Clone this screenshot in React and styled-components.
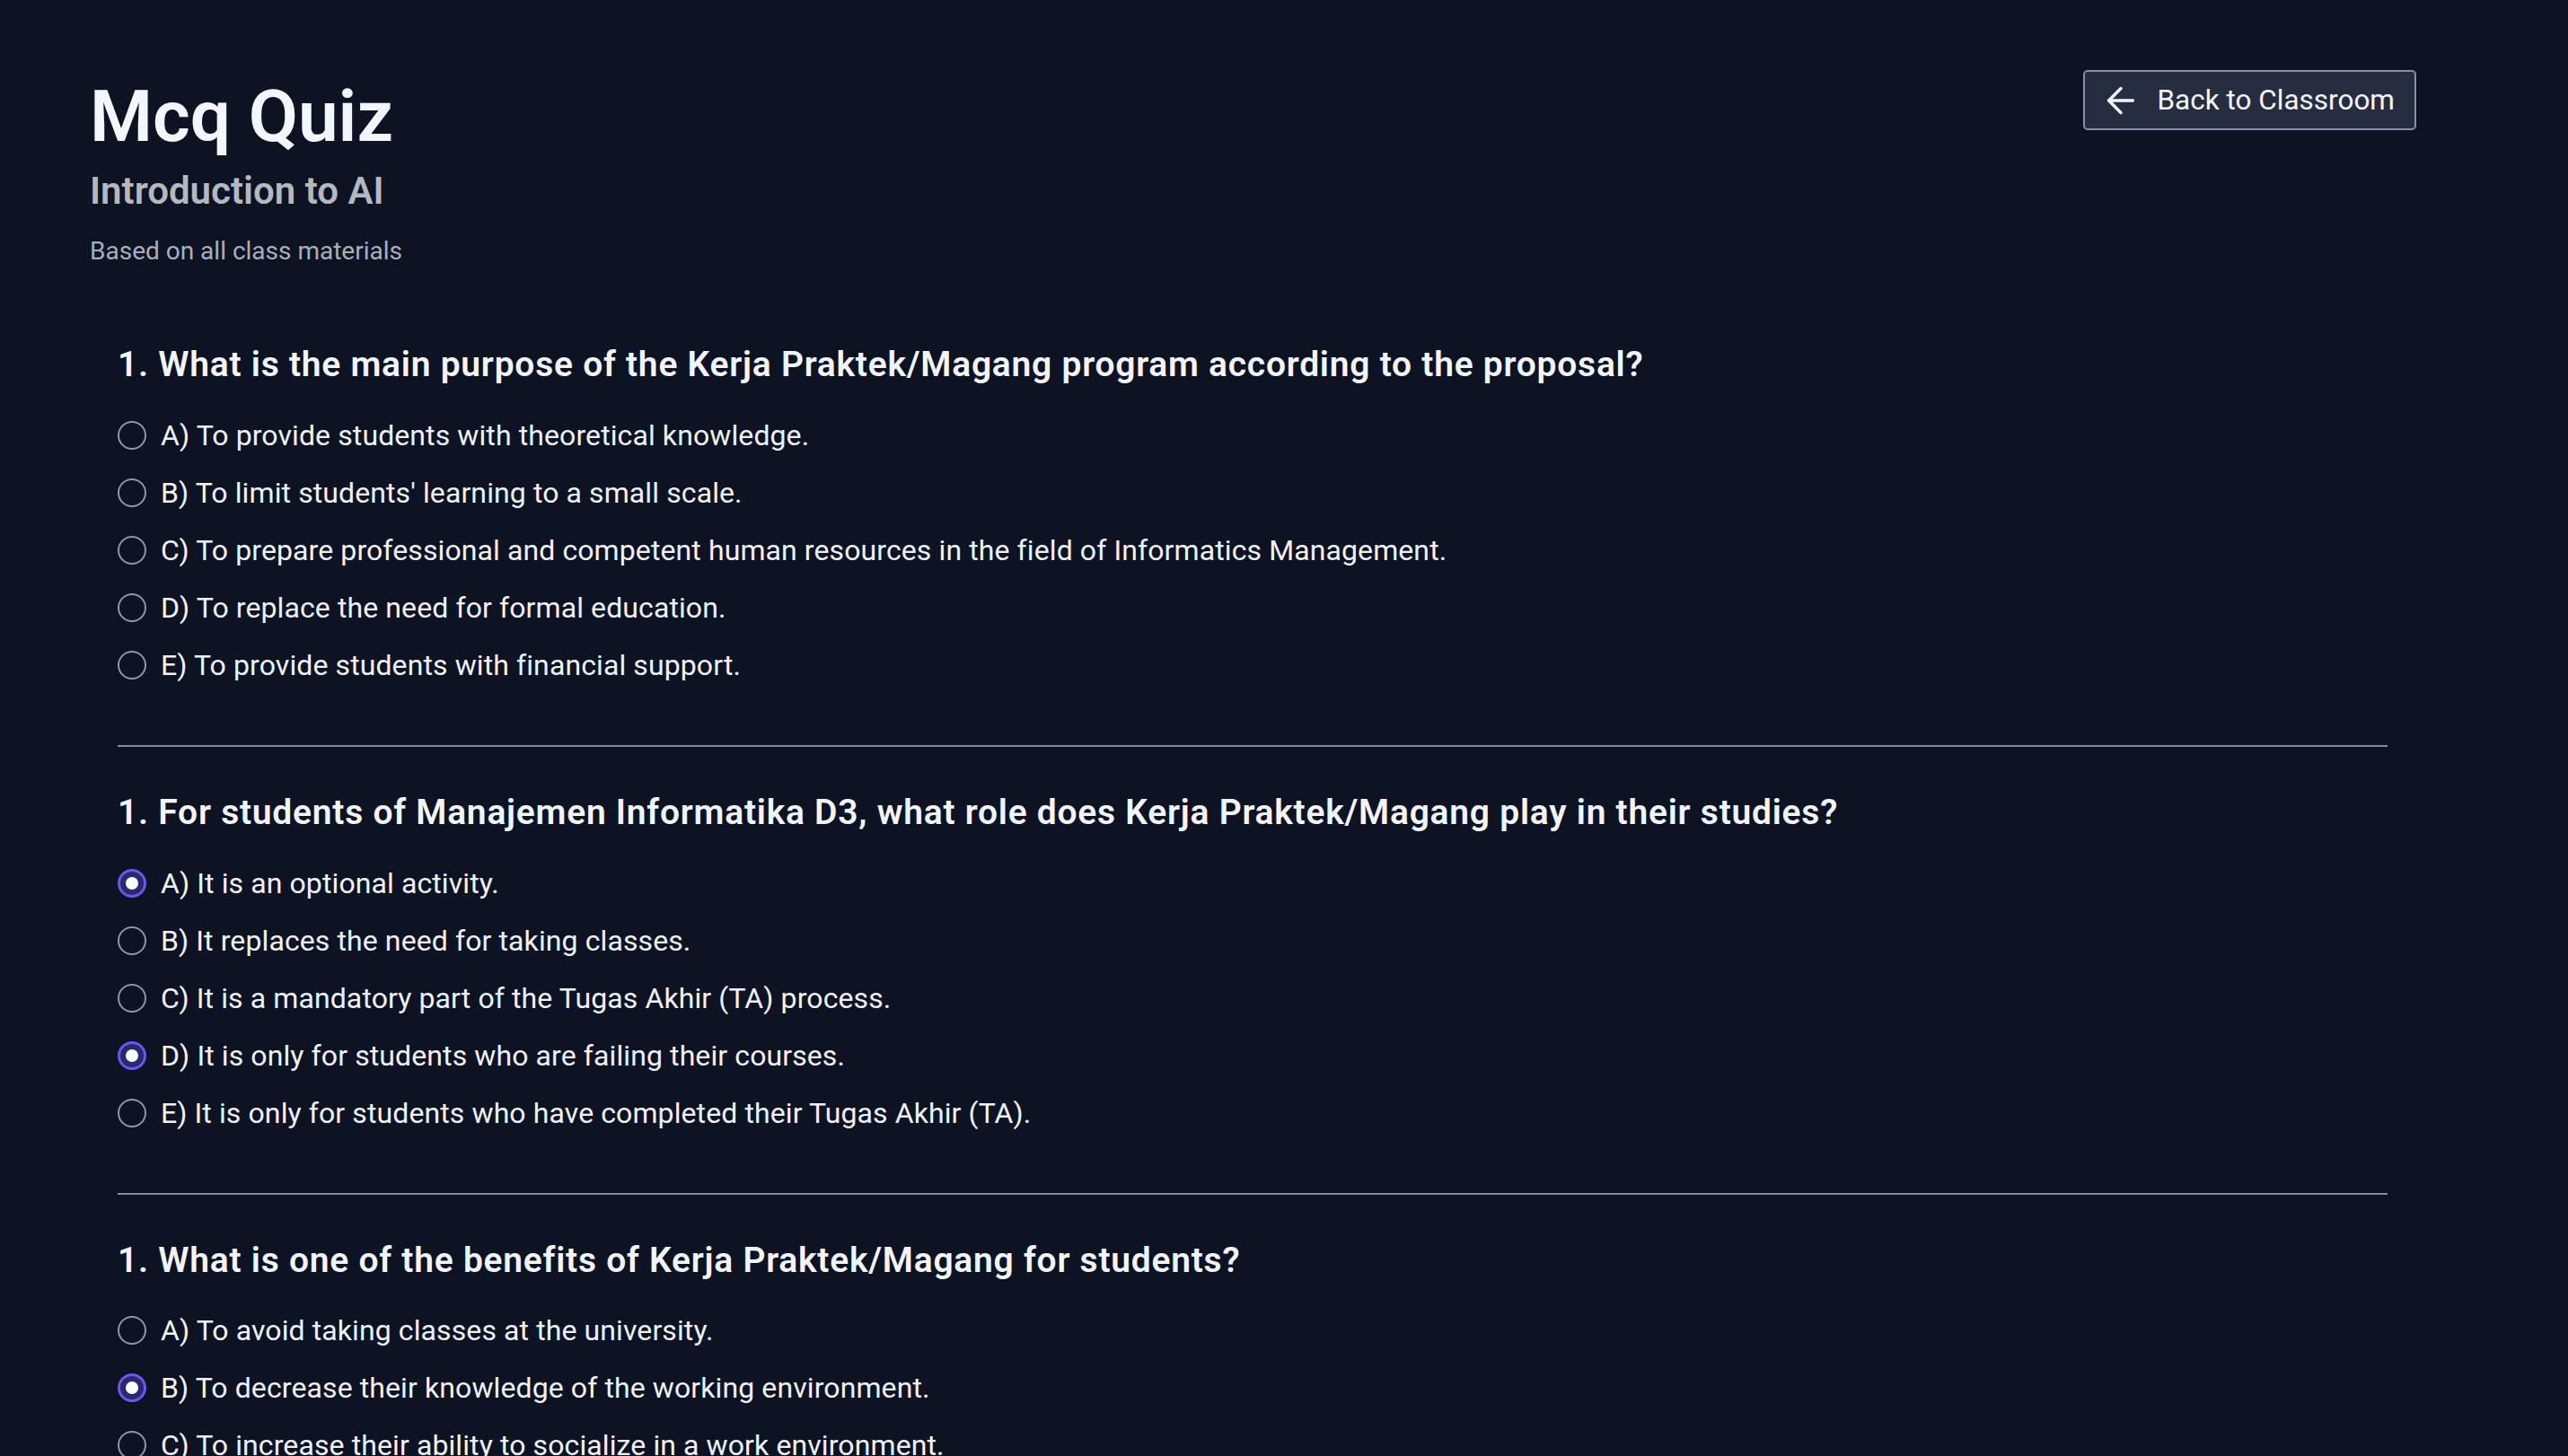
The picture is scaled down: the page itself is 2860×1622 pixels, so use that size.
import React from "react";
import styled, { createGlobalStyle } from "styled-components";
import { ArrowLeft } from "lucide-react";

const GlobalStyle = createGlobalStyle`
  html, body {
    margin: 0;
    padding: 0;
    background: #0e1323;
  }
  body {
    font-family: Roboto, "Noto Sans", "Liberation Sans", sans-serif;
    color: #f1f5fb;
  }
  * {
    box-sizing: border-box;
  }
`;

const Page = styled.div`
  min-height: 100vh;
  background: #0e1323;
  padding: 78px 169px 0 100px;
`;

const Header = styled.div`
  display: flex;
  justify-content: space-between;
  align-items: flex-start;
`;

const Title = styled.h1`
  margin: 4px 0 0;
  font-size: 80px;
  line-height: 1.2;
  font-weight: 600;
  color: #f3f6fb;
`;

const Subtitle = styled.h2`
  margin: 10px 0 0;
  font-size: 42px;
  line-height: 1.2;
  font-weight: 600;
  color: #b3b8c2;
`;

const Caption = styled.p`
  margin: 25px 0 0;
  font-size: 28px;
  line-height: 1.2;
  color: #a9afba;
`;

const BackButton = styled.button`
  display: flex;
  align-items: center;
  gap: 17px;
  height: 67px;
  padding: 0 22px 0 17px;
  background: #272d40;
  border: 2px solid #8790a6;
  border-radius: 5px;
  color: #f3f6fb;
  font-family: inherit;
  font-size: 31.5px;
  cursor: pointer;
`;

const QuestionList = styled.div`
  margin: 86px 32px 0 31px;
`;

const Question = styled.section`
  display: flex;
  flex-direction: column;
`;

const QuestionTitle = styled.h3`
  margin: 0 0 35px;
  font-size: 39px;
  line-height: 1.2;
  font-weight: 600;
  letter-spacing: 0.75px;
  color: #f1f5fb;
`;

const Options = styled.div`
  display: flex;
  flex-direction: column;
  gap: 24px;
`;

const Option = styled.label`
  display: flex;
  align-items: center;
  gap: 16px;
  height: 40px;
  font-size: 32px;
  letter-spacing: 0.1px;
  color: #eef2f8;
  cursor: pointer;
`;

const Radio = styled.span`
  position: relative;
  flex: none;
  width: 32px;
  height: 32px;
  border-radius: 50%;
  border: ${(p) => (p.$checked ? "3px solid #6b57ea" : "2px solid #9096a6")};
  background: ${(p) => (p.$checked ? "#2c2870" : "transparent")};

  &::after {
    content: "";
    display: ${(p) => (p.$checked ? "block" : "none")};
    position: absolute;
    top: 50%;
    left: 50%;
    width: 14px;
    height: 14px;
    margin: -7px 0 0 -7px;
    border-radius: 50%;
    background: #ffffff;
  }
`;

const Divider = styled.hr`
  margin: 69px 0 50px;
  border: none;
  height: 2px;
  background: #858da2;
`;

const questions = [
  {
    title:
      "1. What is the main purpose of the Kerja Praktek/Magang program according to the proposal?",
    options: [
      "A) To provide students with theoretical knowledge.",
      "B) To limit students' learning to a small scale.",
      "C) To prepare professional and competent human resources in the field of Informatics Management.",
      "D) To replace the need for formal education.",
      "E) To provide students with financial support.",
    ],
    selected: [],
  },
  {
    title:
      "1. For students of Manajemen Informatika D3, what role does Kerja Praktek/Magang play in their studies?",
    options: [
      "A) It is an optional activity.",
      "B) It replaces the need for taking classes.",
      "C) It is a mandatory part of the Tugas Akhir (TA) process.",
      "D) It is only for students who are failing their courses.",
      "E) It is only for students who have completed their Tugas Akhir (TA).",
    ],
    selected: [0, 3],
  },
  {
    title: "1. What is one of the benefits of Kerja Praktek/Magang for students?",
    options: [
      "A) To avoid taking classes at the university.",
      "B) To decrease their knowledge of the working environment.",
      "C) To increase their ability to socialize in a work environment.",
      "D) To reduce the number of credits they need to graduate.",
      "E) To skip the Tugas Akhir (TA) requirement.",
    ],
    selected: [1],
  },
];

const App = () => {
  return (
    <>
      <GlobalStyle />
      <Page>
        <Header>
          <div>
            <Title>Mcq Quiz</Title>
            <Subtitle>Introduction to AI</Subtitle>
            <Caption>Based on all class materials</Caption>
          </div>
          <BackButton>
            <ArrowLeft size={46} strokeWidth={1.8} />
            Back to Classroom
          </BackButton>
        </Header>
        <QuestionList>
          {questions.map((q, qi) => (
            <React.Fragment key={qi}>
              {qi > 0 && <Divider />}
              <Question>
                <QuestionTitle>{q.title}</QuestionTitle>
                <Options>
                  {q.options.map((opt, oi) => (
                    <Option key={oi}>
                      <Radio $checked={q.selected.includes(oi)} />
                      {opt}
                    </Option>
                  ))}
                </Options>
              </Question>
            </React.Fragment>
          ))}
        </QuestionList>
      </Page>
    </>
  );
};

export default App;
